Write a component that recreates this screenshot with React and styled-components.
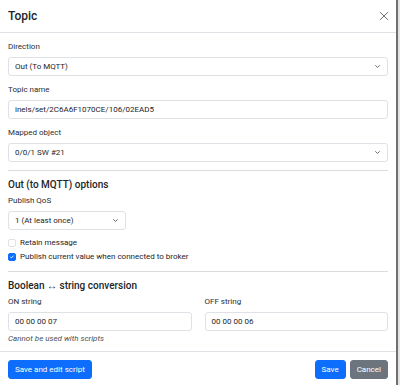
import React from 'react';
import styled, { createGlobalStyle } from 'styled-components';

const Global = createGlobalStyle`
  body {
    margin: 0;
    background: #ffffff;
    font-family: Roboto, "Liberation Sans", sans-serif;
    color: #212529;
  }
  * { box-sizing: border-box; }
`;

const Page = styled.div`
  display: flex;
  width: 400px;
  height: 385px;
  overflow: hidden;
`;

const Modal = styled.div`
  width: 396px;
  background: #fff;
  display: flex;
  flex-direction: column;
  & > * { flex-shrink: 0; }
`;

const Edge = styled.div`
  width: 2px;
  background: #6f6f6f;
`;

const EdgeLight = styled.div`
  width: 2px;
  background: #e4e4e4;
`;

const Header = styled.div`
  height: 33px;
  padding: 0 8px;
  display: flex;
  align-items: center;
  justify-content: space-between;
  border-bottom: 1px solid #dee2e6;
`;

const Title = styled.h5`
  margin: 0;
  font-size: 12px;
  font-weight: 500;
  line-height: 1.5;
`;

const Close = styled.button`
  border: none;
  background: none;
  padding: 0;
  width: 12px;
  height: 12px;
  display: flex;
  align-items: center;
  justify-content: center;
  margin-right: -2px;
`;

const Body = styled.div`
  padding: 8px 8px 7px;
`;

const Group = styled.div`
  margin-bottom: ${p => (p.$mb !== undefined ? p.$mb : 8)}px;
`;

const Label = styled.div`
  font-size: 8px;
  line-height: 12px;
  margin-bottom: 4px;
  color: #2a2e33;
`;

const Field = styled.div`
  height: 19px;
  width: ${p => p.$w || '100%'};
  border: 1px solid #dee2e6;
  border-radius: 3px;
  padding: 0 6px;
  font-size: 8px;
  line-height: 17px;
  display: flex;
  align-items: center;
  justify-content: space-between;
`;

const Rule = styled.hr`
  margin: 0 0 8px;
  border: none;
  border-top: 1px solid #dcdcdc;
  height: 0;
`;

const Heading = styled.h5`
  margin: 0 0 4px;
  font-size: 10px;
  font-weight: 500;
  line-height: 12px;
`;

const Check = styled.div`
  display: flex;
  align-items: center;
  gap: 4px;
  height: 12px;
  margin-bottom: ${p => (p.$last ? 8 : 2)}px;
  font-size: 8px;
  line-height: 12px;
`;

const Box = styled.span`
  width: 8px;
  height: 8px;
  border-radius: 2px;
  border: 1px solid ${p => (p.$on ? '#0d6efd' : '#dee2e6')};
  background: ${p => (p.$on ? '#0d6efd' : '#fff')};
  display: inline-flex;
  align-items: center;
  justify-content: center;
`;

const Row = styled.div`
  display: grid;
  grid-template-columns: 1fr 1fr;
  column-gap: 13px;
`;

const Hint = styled.div`
  margin-top: 2px;
  font-size: 8px;
  line-height: 11px;
  font-style: italic;
  color: #4a4f55;
`;

const Footer = styled.div`
  border-top: 1px solid #dee2e6;
  padding: 8px;
  display: flex;
  align-items: center;
  gap: 4px;
`;

const Spacer = styled.div`
  flex: 1;
`;

const Button = styled.button`
  height: 19px;
  padding: 0 6px;
  border: 1px solid ${p => (p.$gray ? '#6c757d' : '#0d6efd')};
  background: ${p => (p.$gray ? '#6c757d' : '#0d6efd')};
  color: #fff;
  font-family: inherit;
  font-size: 8px;
  line-height: 17px;
  border-radius: 3px;
`;

const Chevron = () => (
  <svg width="7" height="5" viewBox="0 0 16 16">
    <path d="M2 5l6 6 6-6" fill="none" stroke="#343a40" strokeWidth="2.4" strokeLinecap="round" strokeLinejoin="round" />
  </svg>
);

const Select = ({ value, w }) => (
  <Field $w={w}>
    <span>{value}</span>
    <Chevron />
  </Field>
);

export default function App() {
  return (
    <>
      <Global />
      <Page>
        <Modal>
          <Header>
            <Title>Topic</Title>
            <Close>
              <svg width="10" height="10" viewBox="0 0 16 16">
                <path d="M2 2l12 12M14 2L2 14" stroke="#6c6c6c" strokeWidth="1.6" fill="none" />
              </svg>
            </Close>
          </Header>
          <Body>
            <Group>
              <Label>Direction</Label>
              <Select value="Out (To MQTT)" />
            </Group>
            <Group>
              <Label>Topic name</Label>
              <Field>inels/set/2C6A6F1070CE/106/02EAD5</Field>
            </Group>
            <Group>
              <Label>Mapped object</Label>
              <Select value="0/0/1 SW #21" />
            </Group>
            <Rule />
            <Heading>Out (to MQTT) options</Heading>
            <Group $mb={7}>
              <Label>Publish QoS</Label>
              <Select value="1 (At least once)" w="118px" />
            </Group>
            <Check>
              <Box />
              Retain message
            </Check>
            <Check $last>
              <Box $on>
                <svg width="6" height="6" viewBox="0 0 20 20">
                  <path d="M5 10l3 3 7-7" fill="none" stroke="#fff" strokeWidth="3" strokeLinecap="round" strokeLinejoin="round" />
                </svg>
              </Box>
              Publish current value when connected to broker
            </Check>
            <Rule />
            <Heading>Boolean ↔ string conversion</Heading>
            <Row>
              <div>
                <Label>ON string</Label>
                <Field>00 00 00 07</Field>
                <Hint>Cannot be used with scripts</Hint>
              </div>
              <div>
                <Label>OFF string</Label>
                <Field>00 00 00 06</Field>
              </div>
            </Row>
          </Body>
          <Footer>
            <Button>Save and edit script</Button>
            <Spacer />
            <Button>Save</Button>
            <Button $gray>Cancel</Button>
          </Footer>
        </Modal>
        <Edge />
        <EdgeLight />
      </Page>
    </>
  );
}
